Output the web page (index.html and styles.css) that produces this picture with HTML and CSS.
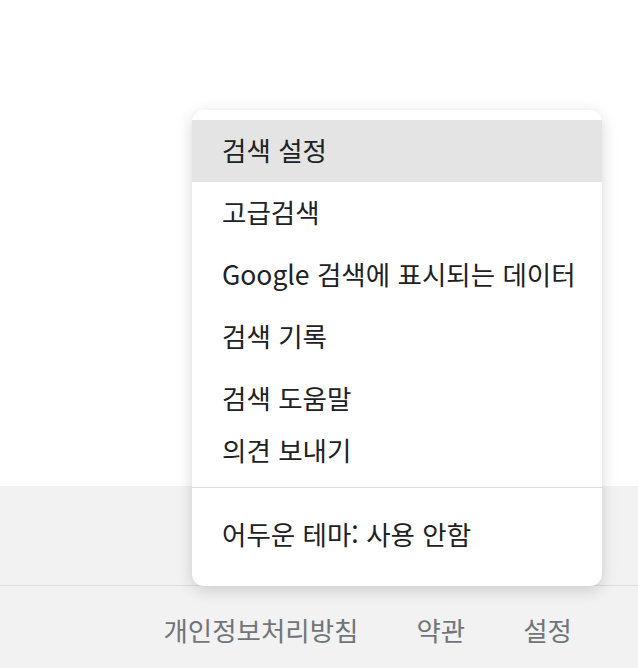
FILE: index.html
```html
<!DOCTYPE html>
<html lang="ko">
<head>
    <meta charset="UTF-8">
    <meta name="viewport" content="width=device-width, initial-scale=1.0">
    <title>설정</title>
    <link rel="stylesheet" href="styles.css">
</head>
<body>
    <!-- 본문 영역 -->
    <div class="page-top"></div>

    <!-- 하단 푸터 -->
    <footer class="footer">
        <div class="footer-band"></div>
        <div class="footer-links">
            <a href="#">개인정보처리방침</a>
            <a href="#">약관</a>
            <a href="#">설정</a>
        </div>
    </footer>

    <!-- 설정 메뉴 -->
    <div class="settings-menu">
        <div class="menu-group">
            <a class="menu-item active" href="#">검색 설정</a>
            <a class="menu-item" href="#">고급검색</a>
            <a class="menu-item" href="#">Google 검색에 표시되는 데이터</a>
            <a class="menu-item" href="#">검색 기록</a>
            <a class="menu-item" href="#">검색 도움말</a>
            <a class="menu-item short" href="#">의견 보내기</a>
        </div>
        <div class="menu-group theme">
            <a class="menu-item" href="#">어두운 테마: 사용 안함</a>
        </div>
    </div>
</body>
</html>
```
FILE: styles.css
```css
/* 기본 */
body {
    margin: 0;
    height: 100vh;
    display: flex;
    flex-direction: column;
    background-color: #ffffff;
    font-family: "Noto Sans CJK KR", "Noto Sans", sans-serif;
    overflow: hidden;
}

a {
    text-decoration: none;
}

.page-top {
    height: 486px;
    flex-shrink: 0;
}

/* 푸터 */
.footer {
    flex: 1;
    background-color: #f2f2f2;
    display: flex;
    flex-direction: column;
}

.footer-band {
    height: 99px;
    border-bottom: 1px solid #dadce0;
}

.footer-links {
    display: flex;
    justify-content: flex-end;
    gap: 58px;
    padding: 25px 66px 0 0;
}

.footer-links a {
    color: #70757a;
    font-size: 26.5px;
    line-height: 38px;
}

/* 설정 메뉴 (팝업) */
.settings-menu {
    position: absolute;
    top: 110px;
    left: 192px;
    width: 410px;
    background-color: #ffffff;
    border-radius: 12px;
    box-shadow: 0 4px 16px rgba(0, 0, 0, 0.16);
    overflow: hidden;
}

.menu-group {
    padding: 10px 0 15px;
    border-bottom: 1px solid #dadce0;
}

.menu-group.theme {
    padding: 16px 0 20px;
    border-bottom: none;
}

.menu-item {
    display: flex;
    align-items: center;
    height: 62px;
    padding-left: 30px;
    padding-bottom: 3px;
    box-sizing: border-box;
    color: #202124;
    font-size: 26.5px;
}

.menu-item.short {
    height: 42px;
}

.menu-item.active {
    background-color: #e4e4e4;
}
```
